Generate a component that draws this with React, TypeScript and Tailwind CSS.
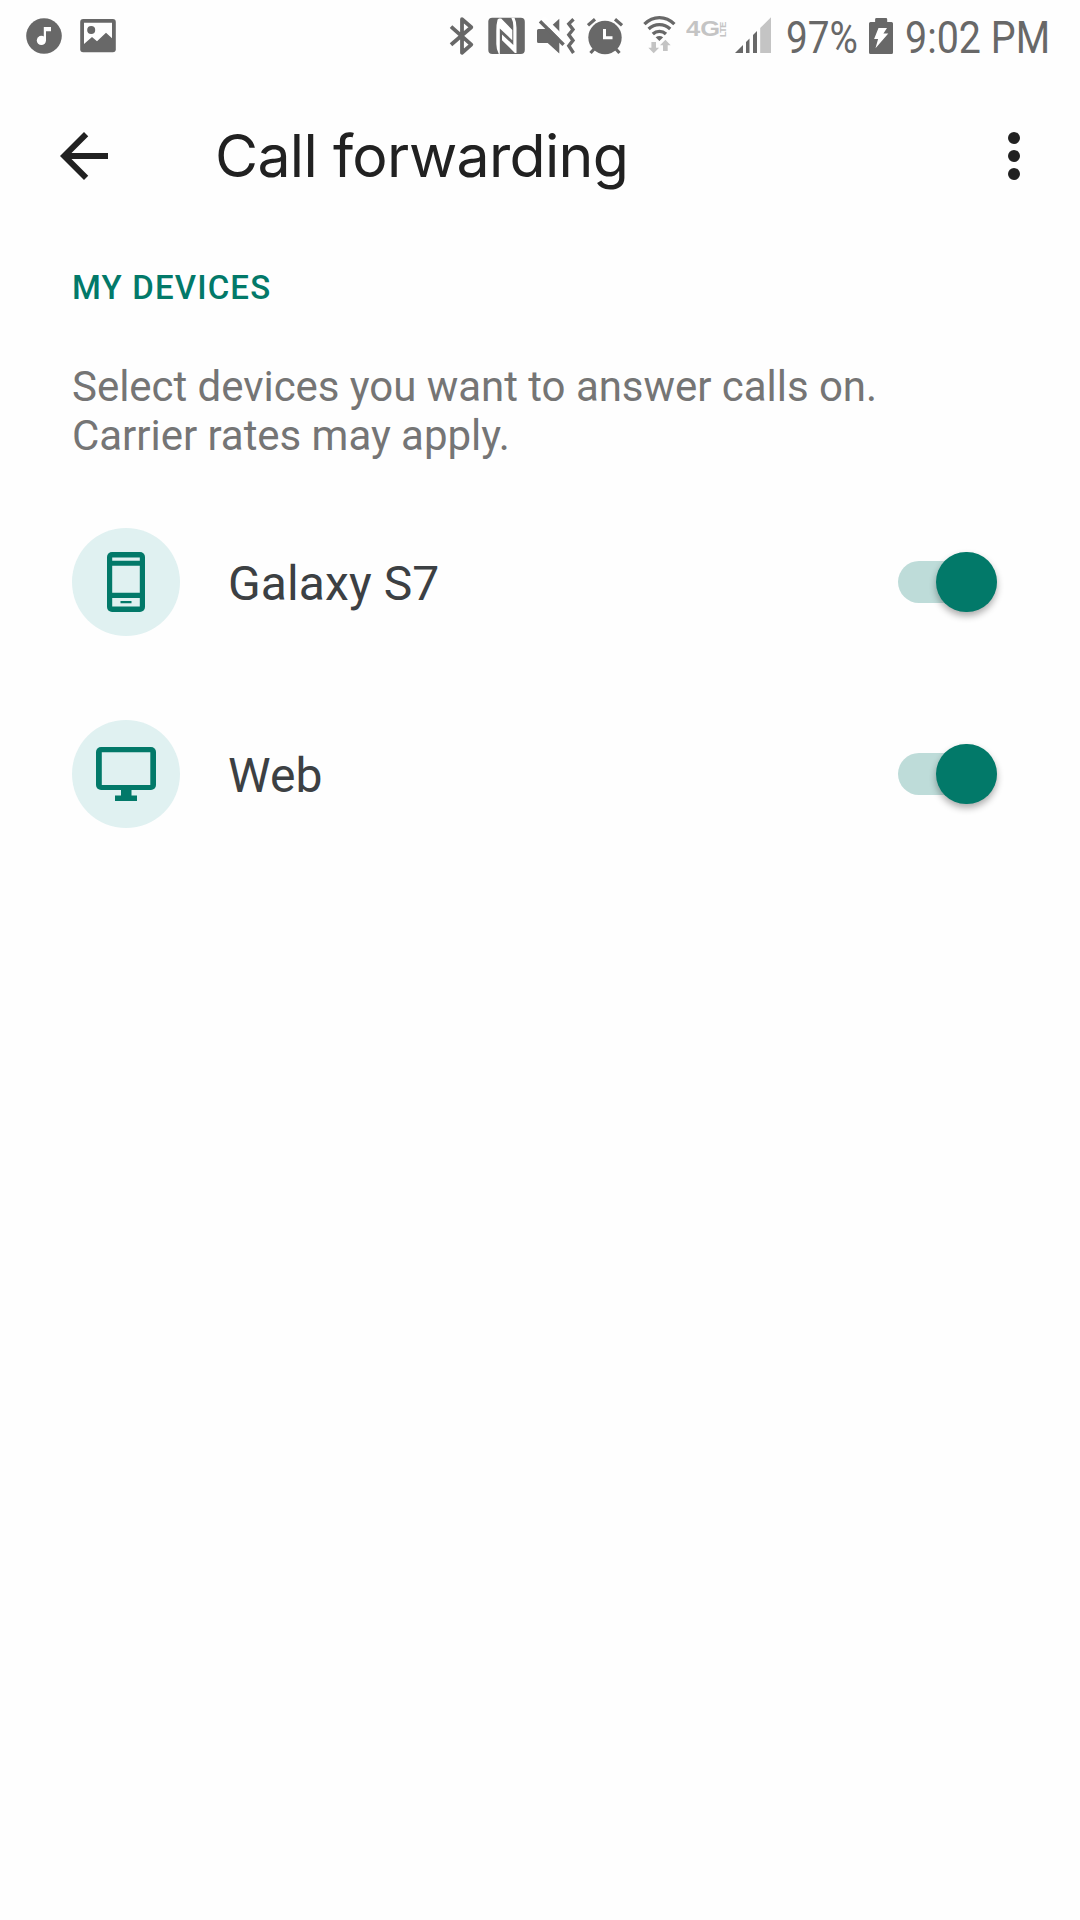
import type { ReactNode } from "react";

const GRAY = "#686868";
const LIGHT = "#c4c4c4";
const TEAL = "#027969";

function StatusBar() {
  return (
    <div className="flex h-[72px] w-full items-start text-[#686868]">
      <svg className="ml-[26px] shrink-0" width="36" height="72" viewBox="26 0 36 72" aria-label="Music">
        <circle cx="44" cy="36" r="17.8" fill={GRAY} />
        <circle cx="41.4" cy="40.4" r="4.6" fill="#fff" />
        <path d="M43.8 27H51v4.2h-5V40.5h-2.2z" fill="#fff" />
      </svg>
      <svg className="ml-[18px] shrink-0" width="36" height="72" viewBox="80 0 36 72" aria-label="Picture">
        <rect x="80.2" y="19" width="35.6" height="33.2" rx="3" fill={GRAY} />
        <path d="M84 22.7h28v15.5l-6-5.4-9 8.4-5-4.2-8 7z" fill="#fff" />
        <circle cx="91.2" cy="30" r="4" fill={GRAY} />
      </svg>
      <svg className="ml-[333px] shrink-0" width="27" height="72" viewBox="449 0 27 72" aria-label="Bluetooth">
        <path d="M451 26.6l20.3 18L462 52.8V19.2l9.3 8-20.3 17.6" fill="none" stroke={GRAY} strokeWidth="3.8" strokeLinejoin="round" />
      </svg>
      <svg className="ml-[12px] shrink-0" width="38" height="72" viewBox="488 0 38 72" aria-label="NFC">
        <rect x="488.3" y="17.7" width="36.5" height="36.4" rx="4" fill={GRAY} />
        <path d="M497.6 19.5l1.4-1h2.2L512.3 30v10.2L499.8 28.5v25.6h-1q-2.5-4.5-2.5-10V31q0-7 1.3-11.5z" fill="#fff" />
        <path d="M502 34.6l11.3 10.4V26q0-4.5-2-8.3h3.2q2 4 2 10v25.2h-1.6L502 40.2z" fill="#fff" />
      </svg>
      <svg className="ml-[11px] shrink-0" width="40" height="72" viewBox="537 0 40 72" aria-label="Muted, vibrate">
        <path d="M538.5 29H548l11.3-10.2v34.6L547.7 43H538.5q-1.5 0-1.5-1.5v-11q0-1.5 1.5-1.5z" fill={GRAY} />
        <path d="M542.6 18L567 42.4" stroke="#fff" strokeWidth="5" />
        <path d="M540 21.2l23.6 23.5" stroke={GRAY} strokeWidth="3.4" />
        <path d="M573.5 19.2l-4.7 4.7 4.2 5.6-4.2 5.3 4.2 5.6-4.2 5.4 4.7 7.2" fill="none" stroke={GRAY} strokeWidth="3.4" />
      </svg>
      <svg className="ml-[10px] shrink-0" width="36" height="72" viewBox="587 0 36 72" aria-label="Alarm">
        <circle cx="605" cy="37.5" r="16.7" fill={GRAY} />
        <path d="M588 25.3l7-6M622 25.3l-7-6M595 48l-4.5 5M615 48l4.5 5" stroke={GRAY} strokeWidth="3.2" />
        <path d="M604.5 29v8.7h8" fill="none" stroke="#fff" strokeWidth="3" />
      </svg>
      <svg className="ml-[20px] shrink-0" width="33" height="72" viewBox="643 0 33 72" aria-label="Wi-Fi">
        <g fill="none" stroke={GRAY} strokeWidth="3.3">
          <path d="M644.4 24.2q6.5-6.5 15-6.5t15 6.5" />
          <path d="M648.6 29q4.5-4.3 10.8-4.3t10.8 4.3" />
          <path d="M652.8 34q2.9-2.7 6.6-2.7t6.6 2.7" />
        </g>
        <path d="M655.6 37.3q3.8-2.6 7.6 0l-3.8 3.8z" fill={GRAY} />
        <path d="M651.4 42h4.6v5.8h3.1l-5.4 5.4-5.4-5.4h3.1zM663 51h4.7v-5.7h3l-5.3-5.5-5.4 5.5h3z" fill={LIGHT} />
      </svg>
      <div className="mt-[21px] ml-[10px] flex h-[16px] w-[42px] shrink-0 text-[#c4c4c4]">
        <span className="block w-[33px] origin-left scale-x-[1.16] font-['Liberation_Sans'] text-[22px] leading-[16px] font-bold">4G</span>
        <span className="block h-[16px] w-[8px] rotate-180 font-['Liberation_Sans'] text-[9px] leading-[8px] font-bold tracking-[-0.5px] [writing-mode:vertical-rl]">LTE</span>
      </div>
      <svg className="ml-[7px] shrink-0" width="37" height="72" viewBox="735 0 37 72" aria-label="Signal">
        <path d="M735 53l8-8v8zM746 42l3.5-3.5V53H746zM753 35l4-4V53h-4z" fill={GRAY} />
        <path d="M760.2 28L771 17.2V53h-10.8z" fill={LIGHT} />
      </svg>
      <div className="mt-[10px] ml-[13.5px] w-[83.5px] shrink-0 font-['Roboto'] text-[45px] leading-[56px]">
        <span className="inline-block origin-left scale-x-[0.86] whitespace-nowrap">97%</span>
      </div>
      <svg className="shrink-0" width="24" height="72" viewBox="869 0 24 72" aria-label="Battery charging">
        <path d="M876.5 18h9.5q1.2 0 1.2 1.2V22h4.3q1.5 0 1.5 1.5v29q0 1.5-1.5 1.5h-21q-1.5 0-1.5-1.5v-29q0-1.5 1.5-1.5h4.6v-2.8q0-1.2 1.4-1.2z" fill={GRAY} />
        <path d="M878.5 28h8.5l-3.6 5.5h4.9l-12.8 14.7 2.6-9.3h-4z" fill="#fff" />
      </svg>
      <div className="mt-[10px] ml-[12px] shrink-0 font-['Roboto'] text-[45px] leading-[56px]">
        <span className="inline-block origin-left scale-x-[0.876] whitespace-nowrap">9:02 PM</span>
      </div>
    </div>
  );
}

function AppBar() {
  return (
    <header className="flex h-[168px] items-center text-[#212121]">
      <button className="ml-12 shrink-0" aria-label="Back">
        <svg width="72" height="72" viewBox="0 0 24 24" fill="currentColor">
          <path d="M20 11H7.83l5.59-5.59L12 4l-8 8 8 8 1.41-1.41L7.83 13H20v-2z" />
        </svg>
      </button>
      <h1 className="ml-[95px] flex-1 font-['Inter'] text-[59px] leading-[72px] tracking-[-0.7px] whitespace-nowrap">Call forwarding</h1>
      <button className="mr-[30px] shrink-0" aria-label="More options">
        <svg width="72" height="72" viewBox="0 0 24 24" fill="currentColor">
          <circle cx="12" cy="6" r="2" />
          <circle cx="12" cy="12" r="2" />
          <circle cx="12" cy="18" r="2" />
        </svg>
      </button>
    </header>
  );
}

function PhoneIcon() {
  return (
    <svg width="108" height="108" viewBox="72 528 108 108">
      <rect x="107" y="552" width="38" height="60" rx="5" fill={TEAL} />
      <path d="M112.2 557.5h27.6v3.3h-27.6zM112.2 565.8h27.6v27h-27.6zM112.2 598h27.6v8.5h-27.6z" fill="#e0f1f1" />
      <path d="M120.5 601h11v2.3h-11z" fill={TEAL} />
    </svg>
  );
}

function MonitorIcon() {
  return (
    <svg width="108" height="108" viewBox="72 720 108 108">
      <rect x="96" y="747" width="60" height="43" rx="5" fill={TEAL} />
      <path d="M101.8 752.2h48.5v32.8h-48.5z" fill="#e0f1f1" />
      <path d="M121 789h10.5v6.5h5.5v5.5h-22v-5.5h6z" fill={TEAL} />
    </svg>
  );
}

function DeviceRow({ name, icon }: { name: string; icon: ReactNode }) {
  return (
    <li className="flex h-48 items-center pr-[83.5px] pl-[72px]">
      <div className="size-[108px] shrink-0 overflow-hidden rounded-full bg-[#e0f1f1]">{icon}</div>
      <span className="ml-[48px] flex-1 pt-[3px] font-['Roboto'] text-[48px] leading-[56px] tracking-[0.1px] text-[#3c4043]">{name}</span>
      <button role="switch" aria-checked="true" aria-label={name} className="flex h-[42px] w-[98.5px] items-center justify-end rounded-full bg-[#bedcd9]">
        <span className="block size-[60.5px] shrink-0 rounded-full bg-[#027969] shadow-[0_4px_7px_rgba(0,0,0,0.32)]" />
      </button>
    </li>
  );
}

export default function App() {
  return (
    <main className="flex h-[1920px] w-[1080px] flex-col overflow-hidden bg-[#fefefe]">
      <StatusBar />
      <AppBar />
      <section>
        <h2 className="mt-[28px] ml-[72px] font-['Roboto'] text-[33px] leading-[40px] font-medium tracking-[1.15px] text-[#027969]">MY DEVICES</h2>
        <p className="mt-[54px] ml-[72px] font-['Roboto'] text-[42px] leading-[49px] whitespace-nowrap tracking-[-0.04px] text-[#757575]">
          Select devices you want to answer calls on.
          <br />
          Carrier rates may apply.
        </p>
        <ul className="mt-[26px]">
          <DeviceRow name="Galaxy S7" icon={<PhoneIcon />} />
          <DeviceRow name="Web" icon={<MonitorIcon />} />
        </ul>
      </section>
    </main>
  );
}
